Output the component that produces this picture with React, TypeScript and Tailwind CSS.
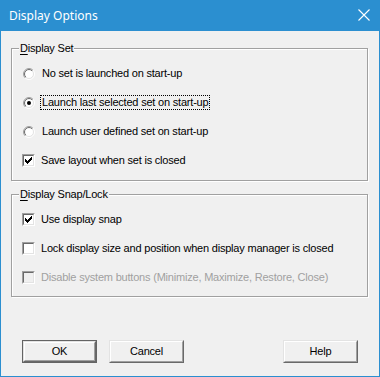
import React from "react";

const CHECK = [
  "......X",
  ".....XX",
  "X...XXX",
  "XX.XXX.",
  "XXXXX..",
  ".XXX...",
  "..X....",
];

function CheckMark({ color }: { color: string }) {
  const rects: React.ReactElement[] = [];
  CHECK.forEach((row, y) =>
    row.split("").forEach((c, x) => {
      if (c === "X") rects.push(<rect key={`${x}-${y}`} x={x} y={y} width={1} height={1} fill={color} />);
    })
  );
  return (
    <svg width="7" height="7" viewBox="0 0 7 7" shapeRendering="crispEdges">
      {rects}
    </svg>
  );
}

function Checkbox({ checked, disabled }: { checked?: boolean; disabled?: boolean }) {
  return (
    <div className="w-[13px] h-[13px] shrink-0 border border-t-[#a0a0a0] border-l-[#a0a0a0] border-b-white border-r-white">
      <div
        className={`w-full h-full flex items-center justify-center border border-t-[#696969] border-l-[#696969] border-b-[#e3e3e3] border-r-[#e3e3e3] ${
          disabled ? "bg-[#f0f0f0]" : "bg-white"
        }`}
      >
        {checked && <CheckMark color="#000" />}
      </div>
    </div>
  );
}

function Radio({ checked, id }: { checked?: boolean; id: string }) {
  return (
    <svg width="12" height="12" viewBox="0 0 12 12" className="shrink-0 ml-px mr-px">
      <defs>
        <linearGradient id={`o${id}`} x1="0" y1="0" x2="1" y2="1">
          <stop offset="0.5" stopColor="#a0a0a0" />
          <stop offset="0.5" stopColor="#ffffff" />
        </linearGradient>
        <linearGradient id={`i${id}`} x1="0" y1="0" x2="1" y2="1">
          <stop offset="0.5" stopColor="#696969" />
          <stop offset="0.5" stopColor="#e3e3e3" />
        </linearGradient>
      </defs>
      <circle cx="6" cy="6" r="5.5" fill="none" stroke={`url(#o${id})`} strokeWidth="1" />
      <circle cx="6" cy="6" r="4.5" fill="white" stroke={`url(#i${id})`} strokeWidth="1" />
      {checked && <circle cx="6" cy="6" r="2" fill="#000" />}
    </svg>
  );
}

function Row({ children }: { children: React.ReactNode }) {
  return <div className="h-[29px] flex items-center">{children}</div>;
}

function Label({ children, disabled }: { children: React.ReactNode; disabled?: boolean }) {
  return (
    <span className={`ml-[6px] leading-[13px] whitespace-nowrap ${disabled ? "text-[#a0a0a0]" : "text-black"}`}>
      {children}
    </span>
  );
}

function Group({ title, children, className }: { title: React.ReactNode; children: React.ReactNode; className?: string }) {
  return (
    <div
      className={`relative w-[357px] border border-[#a0a0a0] shadow-[inset_1px_1px_0_#fff,1px_1px_0_#fff] pl-[10px] ${className ?? ""}`}
    >
      <div className="absolute left-[7px] top-[-7px] px-px bg-[#f0f0f0] leading-[13px] text-black whitespace-nowrap">
        {title}
      </div>
      {children}
    </div>
  );
}

function Button({ children, isDefault }: { children: React.ReactNode; isDefault?: boolean }) {
  const inner = (
    <div className="w-full h-full border border-t-[#e3e3e3] border-l-[#e3e3e3] border-b-[#696969] border-r-[#696969]">
      <div className="w-full h-full border border-t-white border-l-white border-b-[#a0a0a0] border-r-[#a0a0a0] bg-[#f0f0f0] flex items-center justify-center leading-[13px] text-black">
        {children}
      </div>
    </div>
  );
  return (
    <div className={`w-[75px] h-[23px] ${isDefault ? "border border-[#646464]" : ""}`}>
      {inner}
    </div>
  );
}

export default function App() {
  return (
    <div className="w-[380px] h-[377px] bg-[#2b8fd0] flex flex-col px-px pb-px font-['Liberation_Sans',Arial,sans-serif] text-[11px] tracking-[-0.2px]">
      <div className="h-[31px] -mx-px shrink-0 flex items-center justify-between pl-[9px] pr-[10px] tracking-normal">
        <span className="text-white text-[12px] font-['Noto_Sans',sans-serif] leading-[16px]">Display Options</span>
        <svg width="12" height="12" viewBox="0 0 12 12" className="mb-px">
          <path d="M0.5 0.5 L11.5 11.5 M11.5 0.5 L0.5 11.5" stroke="white" strokeWidth="1.1" />
        </svg>
      </div>
      <div className="flex-1 bg-[#f0f0f0] flex flex-col pl-[10px] pr-[10px]">
        <Group
          className="mt-[17px] pt-[10px] pb-[5px]"
          title={
            <>
              <span className="underline underline-offset-[2px]">D</span>isplay Set
            </>
          }
        >
          <Row>
            <Radio id="r1" />
            <Label>No set is launched on start-up</Label>
          </Row>
          <Row>
            <Radio id="r2" checked />
            <span className="ml-[4px] border border-dotted border-black pl-px pr-px leading-[13px] text-black whitespace-nowrap">
              Launch last selected set on start-up
            </span>
          </Row>
          <Row>
            <Radio id="r3" />
            <Label>Launch user defined set on start-up</Label>
          </Row>
          <Row>
            <Checkbox checked />
            <Label>Save layout when set is closed</Label>
          </Row>
        </Group>
        <Group
          className="mt-[13px] pt-[10px] pb-[4px]"
          title={
            <>
              <span className="underline underline-offset-[2px]">D</span>isplay Snap/Lock
            </>
          }
        >
          <Row>
            <Checkbox checked />
            <Label>Use display snap</Label>
          </Row>
          <Row>
            <Checkbox />
            <Label>Lock display size and position when display manager is closed</Label>
          </Row>
          <Row>
            <Checkbox disabled />
            <Label disabled>Disable system buttons (Minimize, Maximize, Restore, Close)</Label>
          </Row>
        </Group>
        <div className="mt-[43px] ml-[11px] mr-[11px] flex items-center">
          <Button isDefault>OK</Button>
          <div className="ml-[12px]">
            <Button>Cancel</Button>
          </div>
          <div className="ml-auto">
            <Button>Help</Button>
          </div>
        </div>
      </div>
    </div>
  );
}
